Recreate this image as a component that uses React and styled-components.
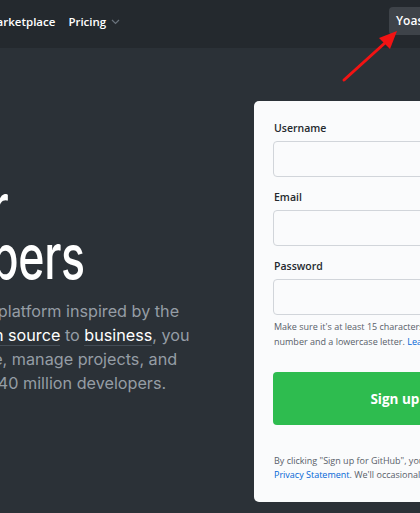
import styled, { createGlobalStyle } from "styled-components";

const GlobalStyle = createGlobalStyle`
  html, body {
    margin: 0;
    padding: 0;
    background: #2b3137;
    overflow: hidden;
  }
  * {
    box-sizing: border-box;
  }
`;

const Viewport = styled.div`
  position: relative;
  width: 420px;
  height: 513px;
  overflow: hidden;
  background: #2b3137;
`;

const Header = styled.header`
  display: flex;
  align-items: center;
  height: 48px;
  background: #24292e;
  font-family: "Open Sans", "Noto Sans", sans-serif;
`;

const Nav = styled.nav`
  display: flex;
  align-items: center;
  gap: 13px;
  margin-left: -14px;
  margin-top: -6px;
`;

const NavLink = styled.a`
  display: flex;
  align-items: center;
  gap: 5px;
  color: #ffffff;
  font-size: 11.5px;
  font-weight: 600;
  text-decoration: none;
`;

const Chevron = styled.svg`
  width: 9px;
  height: 6px;
  margin-top: 2px;
`;

const AccountButton = styled.button`
  flex-shrink: 0;
  margin-left: auto;
  margin-right: -30px;
  margin-top: -7px;
  width: 61px;
  height: 28px;
  padding: 0 0 0 7px;
  border: none;
  border-radius: 4px;
  background: #3e4349;
  color: #ffffff;
  font-family: "Open Sans", "Noto Sans", sans-serif;
  font-size: 12px;
  font-weight: 600;
  text-align: left;
`;

const Hero = styled.section`
  display: grid;
  grid-template-columns: 254px 357px;
  padding-top: 53px;
`;

const Intro = styled.div`
  margin-left: -194px;
  font-family: Inter, "Noto Sans", sans-serif;
`;

/* the heading face in the shot is a narrow one: Inter squeezed to match */
const Title = styled.h1`
  margin: 81px 0 0 45px;
  color: #ffffff;
  font-size: 62px;
  font-weight: 500;
  line-height: 50px;
  letter-spacing: -0.5px;
  white-space: nowrap;
  transform: scaleX(0.72);
  transform-origin: left center;
`;

const TitleLine = styled.span`
  display: block;
  margin-left: ${(p) => p.$shift || 0}px;
`;

const Lead = styled.p`
  margin: 17px 0 0;
  color: #959da5;
  font-size: 16.2px;
  line-height: 24px;
  white-space: nowrap;
`;

const LeadLink = styled.a`
  color: #ffffff;
  text-decoration: none;
  border-bottom: 1px solid #444d56;
`;

const Card = styled.form`
  width: 357px;
  padding: 18px 20px 20px 19px;
  border-radius: 5px;
  background: #fafbfc;
  font-family: "Open Sans", "Noto Sans", sans-serif;
`;

const Label = styled.label`
  display: block;
  margin: 0 0 4px 1px;
  color: #24292e;
  font-size: 10.5px;
  font-weight: 600;
  line-height: 18px;
`;

const Input = styled.input`
  display: block;
  width: 100%;
  height: 36px;
  margin-bottom: ${(p) => (p.$last ? "4px" : "11px")};
  border: 1px solid #d1d5da;
  border-radius: 4px;
  background: #fafbfc;
  outline: none;
`;

const Note = styled.p`
  margin: 0 0 0 1px;
  color: #586069;
  font-size: 9px;
  line-height: 15px;
  white-space: nowrap;
`;

const Link = styled.a`
  color: #0366d6;
  text-decoration: none;
`;

const SubmitButton = styled.button`
  display: block;
  width: 100%;
  height: 53px;
  margin-top: 23px;
  border: none;
  border-radius: 4px;
  background: #2ebc4f;
  color: #ffffff;
  font-family: "Open Sans", "Noto Sans", sans-serif;
  font-size: 13.5px;
  font-weight: 700;
`;

const Terms = styled.p`
  margin: 29px 0 0 1px;
  color: #586069;
  font-size: 9px;
  line-height: 14px;
  white-space: nowrap;
`;

const Annotation = styled.svg`
  position: absolute;
  left: 336px;
  top: 26px;
  width: 66px;
  height: 62px;
  pointer-events: none;
`;

export default function App() {
  return (
    <Viewport>
      <GlobalStyle />
      <Header>
        <Nav>
          <NavLink href="#">Marketplace</NavLink>
          <NavLink href="#">
            Pricing
            <Chevron viewBox="0 0 9 6">
              <path d="M1 1l3.5 3.5L8 1" fill="none" stroke="#6a737d" strokeWidth="1.2" />
            </Chevron>
          </NavLink>
        </Nav>
        <AccountButton type="button">Yoast</AccountButton>
      </Header>

      <Hero>
        <Intro>
          <Title>
            <TitleLine $shift={-8}>Built for</TitleLine>
            <TitleLine>developers</TitleLine>
          </Title>
          <Lead>
            GitHub is a development platform inspired by the
            <br />
            way you work. From <LeadLink href="#">open source</LeadLink> to{" "}
            <LeadLink href="#">business</LeadLink>, you
            <br />
            can host and review code, manage projects, and
            <br />
            build software alongside 40 million developers.
          </Lead>
        </Intro>

        <Card>
          <Label>Username</Label>
          <Input type="text" />
          <Label>Email</Label>
          <Input type="text" />
          <Label>Password</Label>
          <Input type="password" $last />
          <Note>
            Make sure it's at least 15 characters OR at least 8 characters including a
            <br />
            number and a lowercase letter. <Link href="#">Learn more.</Link>
          </Note>
          <SubmitButton type="button">Sign up for GitHub</SubmitButton>
          <Terms>
            By clicking "Sign up for GitHub", you agree to our <Link href="#">Terms of Service</Link> and
            <br />
            <Link href="#">Privacy Statement</Link>. We'll occasionally send you account related emails.
          </Terms>
        </Card>
      </Hero>

      <Annotation viewBox="0 0 66 62">
        <line x1="8" y1="54" x2="50" y2="16" stroke="#f21313" strokeWidth="3" strokeLinecap="round" />
        <polygon points="61,5 43,12 54,23" fill="#f21313" />
      </Annotation>
    </Viewport>
  );
}
